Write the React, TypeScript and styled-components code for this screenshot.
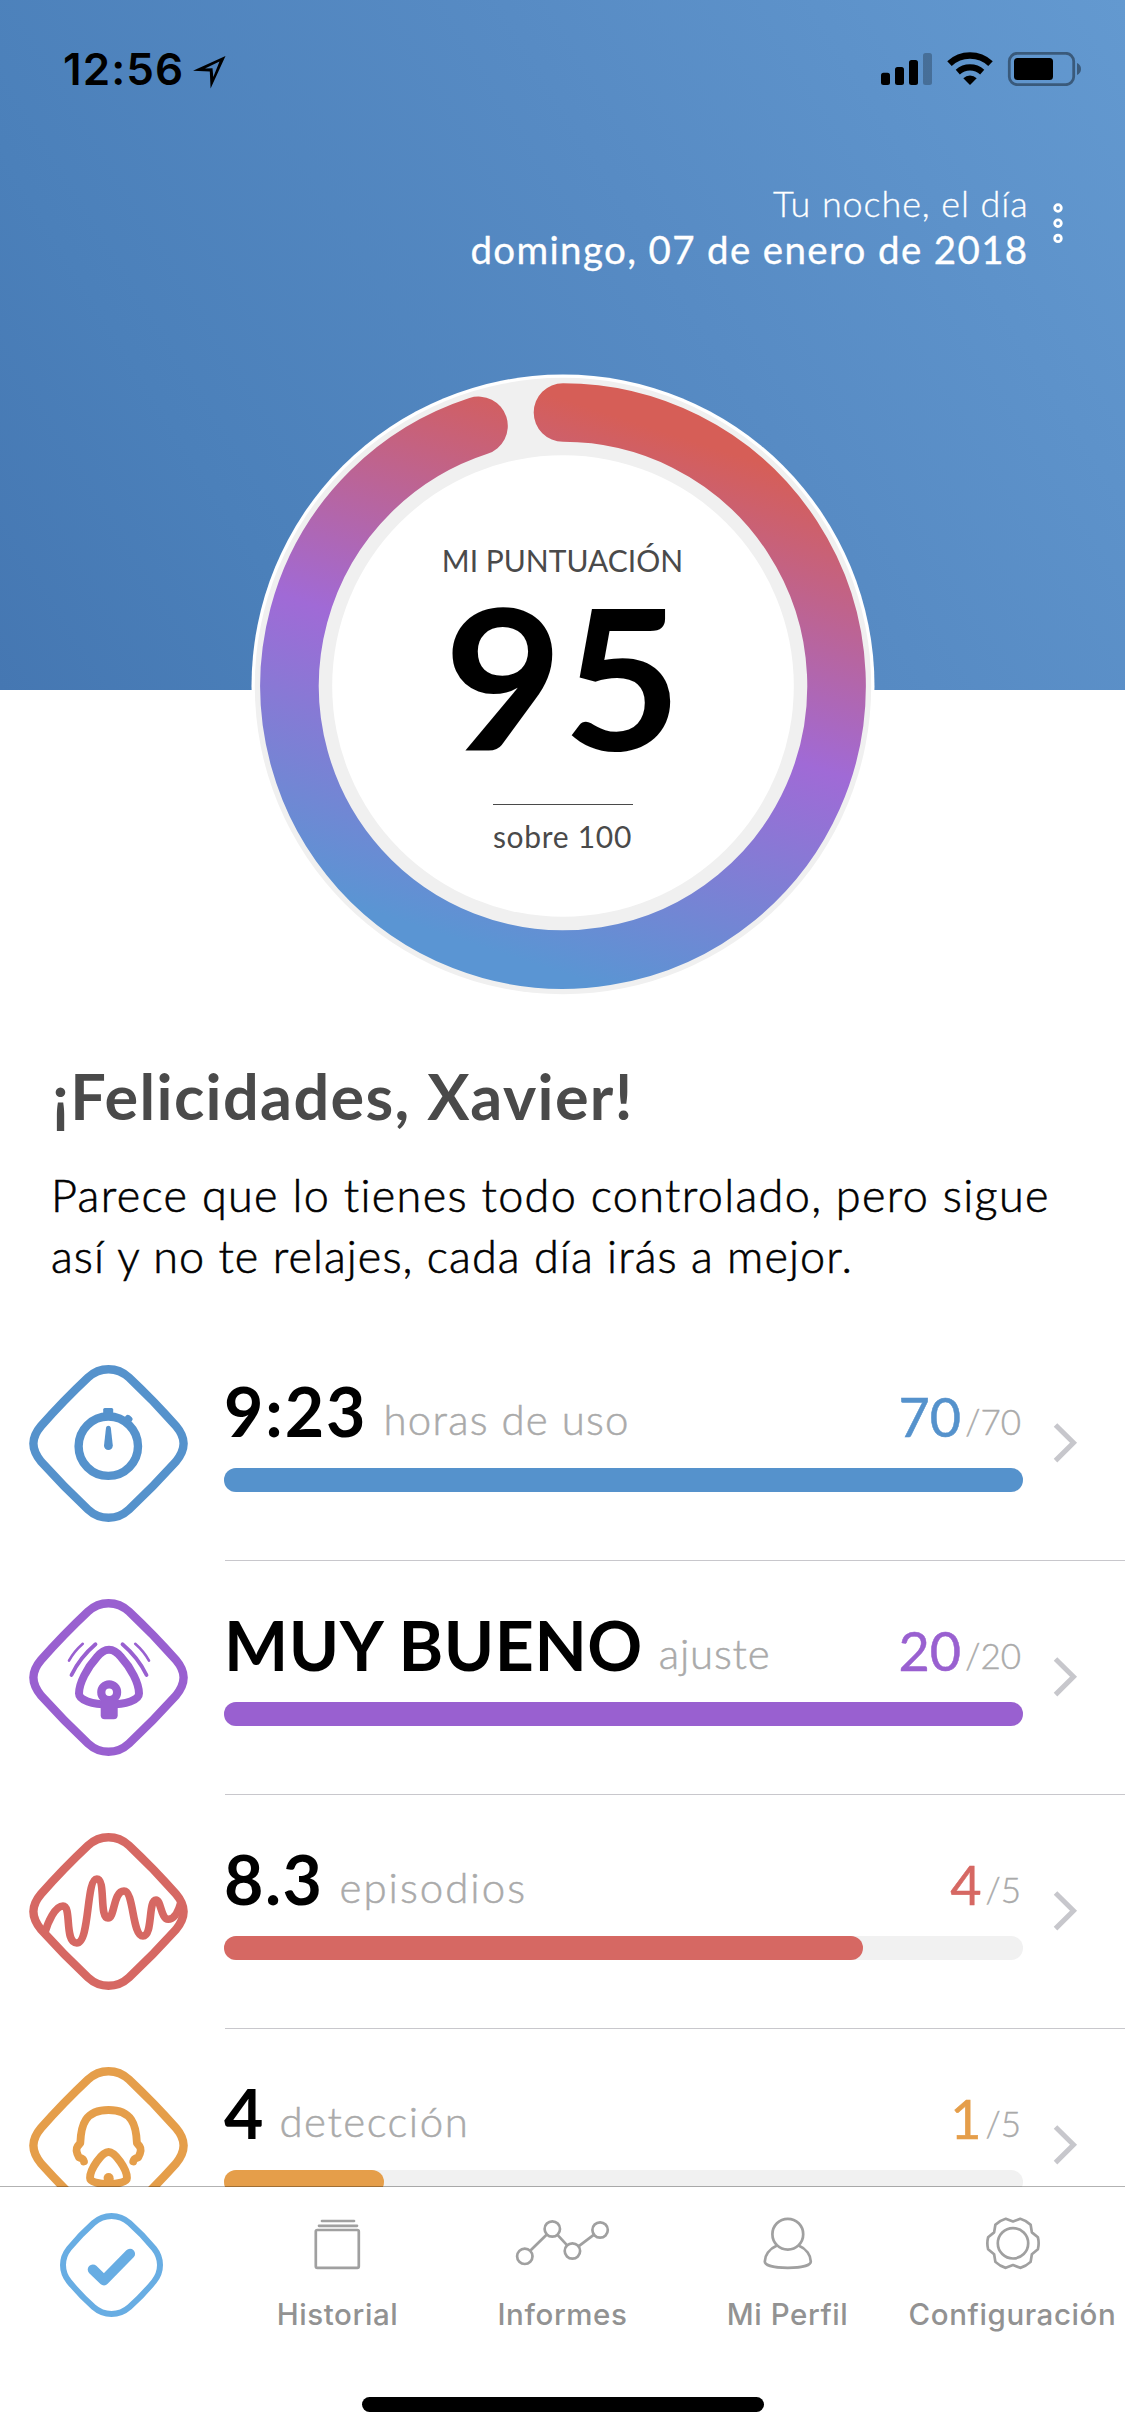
import React from "react";
import styled, { createGlobalStyle } from "styled-components";

const GlobalStyle = createGlobalStyle`
  *, *::before, *::after { box-sizing: border-box; }
  html, body { margin: 0; padding: 0; background: #fff; }
  svg { display: block; flex: none; }
`;

const BLUE = "#5592cc";
const PURPLE = "#9960d0";
const RED = "#d66863";
const ORANGE = "#e59e4a";
const GREY_ICON = "#a0a0a0";

const Screen = styled.div`
  width: 1125px;
  height: 2436px;
  display: flex;
  flex-direction: column;
  overflow: hidden;
  background: #fff;
  color: #000;
  font-family: Lato, "Open Sans", sans-serif;
`;

const Content = styled.main`
  flex: none;
  height: 2187px;
  overflow: hidden;
`;

const Header = styled.header`
  height: 690px;
  background: linear-gradient(58deg, #4577b2 0%, #4b80ba 22%, #578bc4 60%, #6399d0 100%);
`;

const StatusBar = styled.div`
  height: 180px;
  padding: 47px 44px 0 63px;
  display: flex;
  justify-content: space-between;
  align-items: flex-start;
`;

const Clock = styled.div`
  display: flex;
  align-items: flex-start;
  gap: 9px;
  font: 600 44px/44px Inter, sans-serif;
  letter-spacing: 1.1px;
`;

const ArrowIcon = styled.svg`
  margin-top: 9px;
`;

const StatusIcons = styled.div`
  display: flex;
  align-items: flex-start;
  padding-top: 5px;
`;

const DateBar = styled.div`
  display: flex;
  justify-content: flex-end;
  align-items: flex-start;
  padding-right: 61px;
  gap: 23.5px;
  color: #fff;
  text-align: right;
`;

const Intro = styled.div<{ $strong?: boolean }>`
  font-size: ${(p) => (p.$strong ? 38.5 : 36)}px;
  font-weight: ${(p) => (p.$strong ? 400 : 300)};
  line-height: 46px;
  letter-spacing: ${(p) => (p.$strong ? 1.35 : 0.9)}px;
  -webkit-text-stroke: ${(p) => (p.$strong ? 0.3 : 0.3)}px #fff;
  white-space: nowrap;
`;

const MenuIcon = styled.svg`
  margin-top: 22px;
`;

const Dial = styled.section`
  display: grid;
  justify-content: center;
  margin-top: -316px;
  > * { grid-area: 1 / 1; }
`;

const DialText = styled.div`
  display: flex;
  flex-direction: column;
  align-items: center;
  padding-top: 166px;
  color: #4a4a4a;
`;

const DialCaption = styled.div`
  font-size: 30px;
  line-height: 40px;
  white-space: nowrap;
`;

const DialScore = styled.div`
  margin-top: 17px;
  font-size: 196px;
  line-height: 156px;
  font-weight: 700;
  color: #000;
  transform: scaleX(1.045);
`;

const DialRule = styled.div`
  width: 140px;
  height: 1px;
  margin-top: 51px;
  background: #4a4a4a;
`;

const DialTotal = styled.div`
  margin-top: 11px;
  font-size: 30px;
  line-height: 40px;
  letter-spacing: 0.7px;
  white-space: nowrap;
`;

const Greeting = styled.h1`
  margin: 61px 0 0;
  padding-left: 52px;
  font-size: 63px;
  line-height: 74px;
  font-weight: 700;
  letter-spacing: 1.35px;
  color: #4a4a4a;
`;

const Message = styled.p<{ $tracking: number }>`
  margin: 0;
  padding-left: 51px;
  font-size: 45px;
  line-height: 61px;
  font-weight: 300;
  letter-spacing: ${(p) => p.$tracking}px;
  -webkit-text-stroke: 0.6px #000;
  white-space: nowrap;
`;

const MessageBlock = styled.div`
  padding: 32px 0 40px;
`;

const Row = styled.article`
  display: flex;
  height: 234px;
  padding-left: 29px;
`;

const RowIcon = styled.svg`
  margin: 38px 37px 0 0;
`;

const RowBody = styled.div`
  flex: 1;
  display: flex;
  padding-top: 43px;
  border-bottom: 1px solid #c8c7cc;
`;

const RowMain = styled.div`
  width: 799px;
  margin-left: -1px;
`;

const RowLine = styled.div`
  display: flex;
  align-items: flex-end;
  height: 82px;
  white-space: nowrap;
`;

const Value = styled.span<{ $tracking: number }>`
  font-size: 68px;
  line-height: 82px;
  font-weight: 700;
  letter-spacing: ${(p) => p.$tracking}px;
`;

const Unit = styled.span<{ $tracking: number }>`
  flex: 1;
  padding-left: 16px;
  font-size: 42px;
  line-height: 66px;
  font-weight: 300;
  letter-spacing: ${(p) => p.$tracking}px;
  -webkit-text-stroke: 0.5px #aaa;
  color: #aaa;
`;

const Points = styled.span<{ $color: string }>`
  font-size: 54px;
  line-height: 71px;
  color: ${(p) => p.$color};
  -webkit-text-stroke: 0.5px ${(p) => p.$color};
`;

const MaxPoints = styled.span`
  padding: 0 2px 0 4px;
  font-size: 35px;
  line-height: 61px;
  font-weight: 300;
  -webkit-text-stroke: 0.4px #aaa;
  color: #aaa;
`;

const Track = styled.div`
  height: 24px;
  margin-top: 16px;
  border-radius: 12px;
  background: #f1f1f1;
`;

const Fill = styled.div<{ $color: string }>`
  height: 24px;
  border-radius: 12px;
  background: ${(p) => p.$color};
`;

const Chevron = styled.svg`
  margin: 52px 0 0 29px;
`;

const TabBar = styled.nav`
  flex: none;
  height: 250px;
  margin-top: -1px;
  display: flex;
  flex-direction: column;
  align-items: center;
`;

const Tabs = styled.div`
  width: 100%;
  height: 211px;
  display: grid;
  grid-template-columns: repeat(5, 1fr);
  border-top: 1px solid rgba(0, 0, 0, 0.3);
  background: #fff;
  background-clip: padding-box;
`;

const Tab = styled.div<{ $active?: boolean }>`
  display: flex;
  flex-direction: column;
  align-items: center;
  padding-top: ${(p) => (p.$active ? 26 : 29)}px;
  padding-right: ${(p) => (p.$active ? 2 : 0)}px;
`;

const TabLabel = styled.span`
  margin-top: 24px;
  font: 500 29.5px/36px Inter, sans-serif;
  letter-spacing: 0.6px;
  color: #929292;
  white-space: nowrap;
`;

const HomeIndicator = styled.div`
  width: 402px;
  height: 15px;
  border-radius: 8px;
  background: #000;
`;

const Diamond = () => (
  <path
    strokeWidth="8.4"
    d="M79.5 4.2Q91 4.2 100 12.5Q125 36 147 61Q154.6 70 154.6 78.5Q154.6 87 147 96.5Q125 121 100 144.5Q91 152.8 79.5 152.8Q68 152.8 59 144.5Q34 121 12 96.5Q4.4 87 4.4 78.5Q4.4 70 12 61Q34 36 59 12.5Q68 4.2 79.5 4.2Z"
  />
);

const StopwatchGlyph = () => (
  <>
    <circle cx="79.3" cy="81.2" r="29.7" strokeWidth="8.4" />
    <g fill="currentColor" stroke="none">
      <rect x="74.2" y="43" width="10" height="9" rx="1.5" />
      <rect x="95" y="50.4" width="8" height="8" rx="2.5" transform="rotate(40 99 54.4)" />
      <path d="M77 62.8Q77.4 60.7 79.4 60.7Q81.4 60.7 81.8 62.8L83.8 80.6A4.4 4.4 0 0 1 75 80.6Z" />
    </g>
  </>
);

const MaskGlyph = () => (
  <>
    <path
      strokeWidth="8"
      d="M80 50.7C84 50.7 88 53 92 58C102 69 110 84 110 94.5C110 101 97 105.5 80 105.5C63 105.5 50 101 50 94.5C50 84 58 69 68 58C72 53 76 50.7 80 50.7Z"
    />
    <circle cx="80.2" cy="93.3" r="7.9" strokeWidth="8.2" />
    <rect x="71.7" y="101" width="17" height="19.3" rx="4" fill="currentColor" stroke="none" />
    <g strokeLinecap="round">
      <path strokeWidth="3.8" d="M66.5 45.3Q51 58.5 42.5 76M93.5 45.3Q109 58.5 117.5 76" />
      <path strokeWidth="2.6" d="M53.8 44.8Q45 52.5 40 61.7M106.2 44.8Q115 52.5 120 61.7" />
    </g>
  </>
);

const WaveGlyph = () => (
  <path
    strokeWidth="7.6"
    strokeLinejoin="round"
    d="M15.6 100.3C19 89 26 73 34 73C43 73 35 110 47.8 110C61 110 57 46 67.8 46C77 46 70 85 79 85C86 85 84 58 95 58C105 58 103 103 114 103C124 103 119 67 127 67C132 67 132 86.3 139.2 86.3C145 86.3 149 80 152 69"
  />
);

const PatientGlyph = () => (
  <>
    <path
      strokeWidth="7.8"
      strokeLinecap="round"
      strokeLinejoin="round"
      d="M55 94.5Q54.5 91.5 50 90.5Q46 83 48.5 79.5L51.3 76C52 58 56 43 79.6 43C103 43 107.2 58 107.9 76L110.7 79.5Q113.2 83 109.2 90.5Q104.7 91.5 104.2 94.5"
    />
    <path
      strokeWidth="7.8"
      d="M79.6 85C86 85 98 102 98 111C98 119 61 119 61 111C61 102 73 85 79.6 85Z"
    />
    <circle cx="79.6" cy="111" r="5" fill="currentColor" stroke="none" />
    <rect x="75" y="111" width="9.4" height="14" fill="currentColor" stroke="none" />
  </>
);

type Metric = {
  value: string;
  valueTracking: number;
  unit: string;
  unitTracking: number;
  points: number;
  max: number;
  color: string;
  Glyph: React.FC;
};

const metrics: Metric[] = [
  { value: "9:23", valueTracking: 1.9, unit: "horas de uso", unitTracking: 1.25, points: 70, max: 70, color: BLUE, Glyph: StopwatchGlyph },
  { value: "MUY BUENO", valueTracking: 0.5, unit: "ajuste", unitTracking: 0.8, points: 20, max: 20, color: PURPLE, Glyph: MaskGlyph },
  { value: "8.3", valueTracking: 1.5, unit: "episodios", unitTracking: 2, points: 4, max: 5, color: RED, Glyph: WaveGlyph },
  { value: "4", valueTracking: 0, unit: "detección", unitTracking: 1.5, points: 1, max: 5, color: ORANGE, Glyph: PatientGlyph },
];

const MetricRow = ({ value, valueTracking, unit, unitTracking, points, max, color, Glyph }: Metric) => (
  <Row>
    <RowIcon width="159" height="157" viewBox="0 0 159 157" fill="none" stroke={color} color={color}>
      <Diamond />
      <Glyph />
    </RowIcon>
    <RowBody>
      <RowMain>
        <RowLine>
          <Value $tracking={valueTracking}>{value}</Value>
          <Unit $tracking={unitTracking}>{unit}</Unit>
          <Points $color={color}>{points}</Points>
          <MaxPoints>/{max}</MaxPoints>
        </RowLine>
        <Track>
          <Fill $color={color} style={{ width: `${(points / max) * 100}%` }} />
        </Track>
      </RowMain>
      <Chevron width="26" height="42" viewBox="0 0 26 42" fill="none" stroke="#c7c7cc" strokeWidth="5">
        <path d="M3.5 3L21.5 20.8L3.5 38.6" />
      </Chevron>
    </RowBody>
  </Row>
);

const polar = (deg: number, r: number) => {
  const a = (deg * Math.PI) / 180;
  return `${(60 + r * Math.sin(a)).toFixed(2)} ${(27.3 - r * Math.cos(a)).toFixed(2)}`;
};

const gearPath =
  [0, 60, 120, 180, 240, 300]
    .map((d, i) => `${i ? "L" : "M"}${polar(d, 21.8)}L${polar(d + 16.5, 25.6)}Q${polar(d + 30, 26.4)} ${polar(d + 43.5, 25.6)}`)
    .join("") + "Z";

const tabs = [
  {
    label: "Historial",
    icon: (
      <>
        <rect x="37.8" y="14" width="43" height="37.8" rx="1.5" />
        <path d="M41 9.8H79M44 5H76" strokeLinecap="round" />
      </>
    ),
  },
  {
    label: "Informes",
    icon: (
      <>
        <circle cx="21.8" cy="40.3" r="7.7" />
        <circle cx="49.3" cy="13" r="7.7" />
        <circle cx="69.4" cy="35" r="7.7" />
        <circle cx="97.1" cy="14" r="7.7" />
        <path d="M27.2 34.8L43.8 18.5M54.5 18.8L64.2 29.3M75.5 30.3L91 18.6" />
      </>
    ),
  },
  {
    label: "Mi Perfil",
    icon: (
      <>
        <circle cx="59.8" cy="18.2" r="15.4" />
        <path d="M49 29.6C41 33 36.8 39.5 36.8 45.5C36.8 49.5 46 51.8 59.8 51.8C73.6 51.8 82.8 49.5 82.8 45.5C82.8 39.5 78.6 33 70.6 29.6" />
      </>
    ),
  },
  {
    label: "Configuración",
    icon: (
      <>
        <circle cx="60" cy="27.3" r="15.2" />
        <path d={gearPath} strokeLinejoin="round" />
      </>
    ),
  },
];

export default function App() {
  return (
    <Screen>
      <GlobalStyle />
      <Content>
        <Header>
          <StatusBar>
            <Clock>
              12:56
              <ArrowIcon width="33" height="33" viewBox="0 0 33 33" fillRule="evenodd">
                <path d="M32.5 0L0 14.8L16.8 15.4L17.6 32.5ZM26.5 5.5L12 12.4L19.5 12.2L20.3 21Z" />
              </ArrowIcon>
            </Clock>
            <StatusIcons>
              <svg width="200" height="34" viewBox="0 0 200 34">
                <rect x="0" y="20.8" width="9" height="12.2" rx="2.5" />
                <rect x="14" y="15" width="9" height="18" rx="2.5" />
                <rect x="28" y="8" width="9" height="25" rx="2.5" />
                <rect x="42" y="1" width="9" height="32" rx="2.5" opacity="0.25" />
                <g fill="none" stroke="#000">
                  <path d="M68.5 11.6A30 30 0 0 1 109.5 11.6" strokeWidth="6.6" />
                  <path d="M76.8 20.1A18.3 18.3 0 0 1 101.2 20.1" strokeWidth="6.2" />
                </g>
                <path d="M82.3 26.2A9.8 9.8 0 0 1 95.7 26.2L89 33Z" />
                <rect x="128.3" y="1.3" width="64.4" height="31.4" rx="8" fill="none" stroke="#000" strokeWidth="2.8" opacity="0.4" />
                <rect x="133" y="6" width="39" height="22" rx="3.5" />
                <path d="M196 11Q200 12.8 200 17Q200 21.2 196 23Z" opacity="0.4" />
              </svg>
            </StatusIcons>
          </StatusBar>
          <DateBar>
            <div>
              <Intro>Tu noche, el día</Intro>
              <Intro $strong>domingo, 07 de enero de 2018</Intro>
            </div>
            <MenuIcon width="12" height="42" viewBox="0 0 12 42" fill="none" stroke="#fff" strokeWidth="2.8">
              <circle cx="6" cy="6" r="3.3" />
              <circle cx="6" cy="21.2" r="3.3" />
              <circle cx="6" cy="36.4" r="3.3" />
            </MenuIcon>
          </DateBar>
        </Header>

        <Dial>
          <svg width="624" height="624" viewBox="-312 -312 624 624">
            <defs>
              <linearGradient id="ring" gradientUnits="userSpaceOnUse" x1="84" y1="-260" x2="-84" y2="260">
                <stop offset="0" stopColor="#d65e57" />
                <stop offset="0.5" stopColor="#a06ad6" />
                <stop offset="1" stopColor="#5a95d3" />
              </linearGradient>
            </defs>
            <circle r="311.5" fill="#fff" />
            <circle r="308.2" fill="#f0f0f0" />
            <circle r="230.8" fill="#fff" />
            <path
              d="M0 -273.5A273.5 273.5 0 1 1 -84.5 -260.1"
              fill="none"
              stroke="url(#ring)"
              strokeWidth="58.6"
              strokeLinecap="round"
            />
          </svg>
          <DialText>
            <DialCaption>MI PUNTUACIÓN</DialCaption>
            <DialScore>95</DialScore>
            <DialRule />
            <DialTotal>sobre 100</DialTotal>
          </DialText>
        </Dial>

        <Greeting>¡Felicidades, Xavier!</Greeting>
        <MessageBlock>
          <Message $tracking={1.33}>Parece que lo tienes todo controlado, pero sigue</Message>
          <Message $tracking={1.07}>así y no te relajes, cada día irás a mejor.</Message>
        </MessageBlock>

        {metrics.map((m) => (
          <MetricRow key={m.unit} {...m} />
        ))}
      </Content>

      <TabBar>
        <Tabs>
          <Tab $active>
            <svg width="103" height="104" viewBox="0 0 103 104" fill="none" stroke="#68ade3" strokeWidth="6">
              <path d="M51.5 3Q61.5 3 69.5 10Q83 22 94 35.5Q100 43 100 52Q100 61 94 68.5Q83 82 69.5 94Q61.5 101 51.5 101Q41.5 101 33.5 94Q20 82 9 68.5Q3 61 3 52Q3 43 9 35.5Q20 22 33.5 10Q41.5 3 51.5 3Z" />
              <path d="M32.8 56.5L44 67.3L70 40.8" strokeWidth="10.2" strokeLinecap="round" strokeLinejoin="round" />
            </svg>
          </Tab>
          {tabs.map((t) => (
            <Tab key={t.label}>
              <svg width="120" height="56" viewBox="0 0 120 56" fill="none" stroke={GREY_ICON} strokeWidth="2.7">
                {t.icon}
              </svg>
              <TabLabel>{t.label}</TabLabel>
            </Tab>
          ))}
        </Tabs>
        <HomeIndicator />
      </TabBar>
    </Screen>
  );
}
